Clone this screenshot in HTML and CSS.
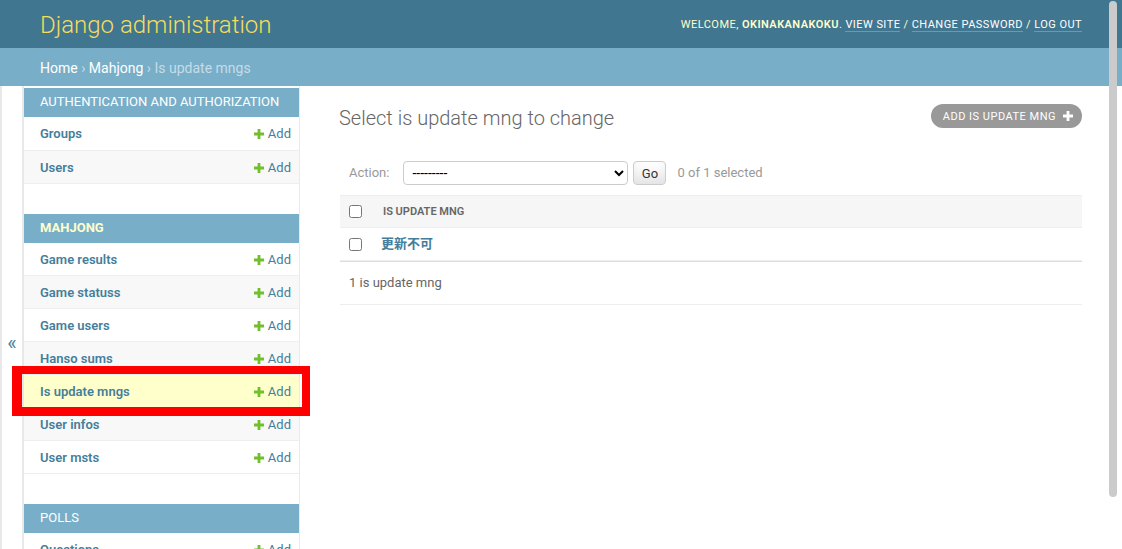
FILE: index.html
```html
<!DOCTYPE html>
<html lang="en">
<head>
<meta charset="utf-8">
<title>Select is update mng to change | Django site admin</title>
<link rel="stylesheet" href="styles.css">
</head>
<body>
<div class="container">
  <header class="header">
    <h1 class="site-name">Django administration</h1>
    <div class="user-tools">Welcome, <strong>okinakanakoku</strong>. <a href="#">View site</a> / <a href="#">Change password</a> / <a href="#">Log out</a></div>
  </header>
  <nav class="breadcrumbs"><a href="#">Home</a> › <a href="#">Mahjong</a> › Is update mngs</nav>
  <div class="main">
    <div class="toggle"><span class="toggle-glyph">«</span></div>
    <nav class="sidebar">
      <div class="module">
        <table>
          <caption>Authentication and Authorization</caption>
          <tbody>
            <tr><th><a href="#">Groups</a></th><td><a href="#" class="addlink"><svg class="plus" width="10" height="10" viewBox="0 0 10 10"><path d="M3.6 0h2.8v3.6H10v2.8H6.4V10H3.6V6.4H0V3.6h3.6z" fill="#70bf2b"/></svg>Add</a></td></tr>
            <tr><th><a href="#">Users</a></th><td><a href="#" class="addlink"><svg class="plus" width="10" height="10" viewBox="0 0 10 10"><path d="M3.6 0h2.8v3.6H10v2.8H6.4V10H3.6V6.4H0V3.6h3.6z" fill="#70bf2b"/></svg>Add</a></td></tr>
          </tbody>
        </table>
      </div>
      <div class="module current-app">
        <table>
          <caption>Mahjong</caption>
          <tbody>
            <tr><th><a href="#">Game results</a></th><td><a href="#" class="addlink"><svg class="plus" width="10" height="10" viewBox="0 0 10 10"><path d="M3.6 0h2.8v3.6H10v2.8H6.4V10H3.6V6.4H0V3.6h3.6z" fill="#70bf2b"/></svg>Add</a></td></tr>
            <tr><th><a href="#">Game statuss</a></th><td><a href="#" class="addlink"><svg class="plus" width="10" height="10" viewBox="0 0 10 10"><path d="M3.6 0h2.8v3.6H10v2.8H6.4V10H3.6V6.4H0V3.6h3.6z" fill="#70bf2b"/></svg>Add</a></td></tr>
            <tr><th><a href="#">Game users</a></th><td><a href="#" class="addlink"><svg class="plus" width="10" height="10" viewBox="0 0 10 10"><path d="M3.6 0h2.8v3.6H10v2.8H6.4V10H3.6V6.4H0V3.6h3.6z" fill="#70bf2b"/></svg>Add</a></td></tr>
            <tr><th><a href="#">Hanso sums</a></th><td><a href="#" class="addlink"><svg class="plus" width="10" height="10" viewBox="0 0 10 10"><path d="M3.6 0h2.8v3.6H10v2.8H6.4V10H3.6V6.4H0V3.6h3.6z" fill="#70bf2b"/></svg>Add</a></td></tr>
            <tr class="current-model"><th><a href="#">Is update mngs</a></th><td><a href="#" class="addlink"><svg class="plus" width="10" height="10" viewBox="0 0 10 10"><path d="M3.6 0h2.8v3.6H10v2.8H6.4V10H3.6V6.4H0V3.6h3.6z" fill="#70bf2b"/></svg>Add</a></td></tr>
            <tr><th><a href="#">User infos</a></th><td><a href="#" class="addlink"><svg class="plus" width="10" height="10" viewBox="0 0 10 10"><path d="M3.6 0h2.8v3.6H10v2.8H6.4V10H3.6V6.4H0V3.6h3.6z" fill="#70bf2b"/></svg>Add</a></td></tr>
            <tr><th><a href="#">User msts</a></th><td><a href="#" class="addlink"><svg class="plus" width="10" height="10" viewBox="0 0 10 10"><path d="M3.6 0h2.8v3.6H10v2.8H6.4V10H3.6V6.4H0V3.6h3.6z" fill="#70bf2b"/></svg>Add</a></td></tr>
          </tbody>
        </table>
      </div>
      <div class="module">
        <table>
          <caption>Polls</caption>
          <tbody>
            <tr><th><a href="#">Questions</a></th><td><a href="#" class="addlink"><svg class="plus" width="10" height="10" viewBox="0 0 10 10"><path d="M3.6 0h2.8v3.6H10v2.8H6.4V10H3.6V6.4H0V3.6h3.6z" fill="#70bf2b"/></svg>Add</a></td></tr>
          </tbody>
        </table>
      </div>
    </nav>
    <main class="content">
      <div class="title-row">
        <h1 class="page-title">Select is update mng to change</h1>
        <a href="#" class="tool-add">Add is update mng<svg class="tool-plus" width="10" height="10" viewBox="0 0 10 10"><path d="M3.6 0h2.8v3.6H10v2.8H6.4V10H3.6V6.4H0V3.6h3.6z" fill="#fff"/></svg></a>
      </div>
      <div class="actions">
        <label class="action-label">Action:</label>
        <select class="action-select"><option>---------</option></select>
        <button class="go-button" type="button">Go</button>
        <span class="action-counter">0 of 1 selected</span>
      </div>
      <table class="results">
        <thead>
          <tr><th class="cb-col"><input type="checkbox" class="cb"></th><th class="col-head">Is update mng</th></tr>
        </thead>
        <tbody>
          <tr><td class="cb-col"><input type="checkbox" class="cb"></td><th class="col-val"><a href="#">更新不可</a></th></tr>
        </tbody>
      </table>
      <p class="paginator">1 is update mng</p>
    </main>
  </div>
</div>
<div class="annotation"></div>
<div class="scroll-thumb"></div>
</body>
</html>
```

FILE: styles.css
```css
html {
  overflow: hidden;
  height: 100%;
}
body {
  margin: 0;
  font-family: Roboto, "Noto Sans", "Noto Sans CJK JP", sans-serif;
  font-size: 14px;
  color: #333;
  background: #fff;
}
a {
  text-decoration: none;
  color: #447e9b;
}

/* header */
.header {
  display: flex;
  justify-content: space-between;
  align-items: center;
  height: 48px;
  box-sizing: border-box;
  padding: 11px 40px 9px;
  background: #417690;
  color: #ffc;
}
.site-name {
  margin: 0;
  font-size: 24px;
  line-height: 28px;
  font-weight: 300;
  color: #f5dd5d;
}
.user-tools {
  font-size: 11px;
  letter-spacing: 0.45px;
  text-transform: uppercase;
  font-weight: 400;
  color: #ffc;
  line-height: 14px;
}
.user-tools strong {
  font-weight: 600;
}
.user-tools a {
  color: #fff;
  border-bottom: 1px solid rgba(255, 255, 255, 0.25);
}

/* breadcrumbs */
.breadcrumbs {
  height: 38px;
  box-sizing: border-box;
  background: #79aec8;
  padding: 11px 40px 9px;
  font-size: 14px;
  line-height: 18px;
  color: #c4dce8;
}
.breadcrumbs a {
  color: #fff;
}

/* main */
.main {
  display: flex;
  align-items: stretch;
}
.toggle {
  flex: 0 0 24px;
  box-sizing: border-box;
  border-left: 2px solid #e8e8e8;
  border-right: 2px solid #e8e8e8;
  text-align: center;
  color: #447e9b;
  font-size: 20px;
}
.toggle-glyph {
  display: block;
  margin-top: 246px;
  line-height: 23px;
}
.sidebar {
  flex: 0 0 276px;
  box-sizing: border-box;
  border-right: 1px solid #eaeaea;
  padding-top: 2px;
}
.module {
  margin-bottom: 30px;
}
.module table {
  width: 100%;
  border-collapse: collapse;
}
.module caption {
  text-align: left;
  padding: 7px 16px 9px;
  font-size: 13px;
  line-height: 13px;
  background: #79aec8;
  color: #fff;
  text-transform: uppercase;
  font-weight: 400;
}
.current-app caption {
  color: #ffc;
  font-weight: 700;
}
.module th,
.module td {
  height: 33px;
  box-sizing: border-box;
  font-size: 13px;
  line-height: 16px;
  border-bottom: 1px solid #eee;
  padding: 9px 8px 7px;
  vertical-align: middle;
}
.module th {
  text-align: left;
  width: 100%;
  padding-left: 16px;
  font-weight: 600;
}
.module td {
  text-align: right;
  white-space: nowrap;
}
.module tbody tr:nth-child(even) {
  background: #f8f8f8;
}
.module tbody tr.current-model {
  background: #ffc;
}
.addlink {
  display: inline-block;
  height: 16px;
  line-height: 16px;
  font-weight: 400;
}
.plus {
  display: inline-block;
  vertical-align: -1px;
  margin-right: 4px;
}

/* content */
.content {
  flex: 1;
  min-width: 0;
  padding: 20px 40px;
}
.title-row {
  display: flex;
  justify-content: space-between;
  align-items: flex-start;
  margin-bottom: 21px;
}
.page-title {
  margin: 0 0 0 -1px;
  font-size: 20px;
  line-height: 24px;
  font-weight: 300;
  color: #666;
}
.tool-add {
  display: inline-flex;
  align-items: center;
  height: 24px;
  margin-top: -2px;
  padding: 0 9px 0 12px;
  background: #999;
  border-radius: 15px;
  color: #fff;
  font-size: 11px;
  letter-spacing: 0.5px;
  text-transform: uppercase;
  font-weight: 400;
}
.tool-plus {
  margin-left: 7px;
}

.actions {
  display: flex;
  align-items: center;
  height: 44px;
  box-sizing: border-box;
  padding: 10px 9px;
  line-height: 24px;
  color: #999;
  font-size: 13px;
}
.action-select {
  width: 225px;
  height: 24px;
  margin: 0 0 0 14px;
  padding: 0 0 0 4px;
  border: 1px solid #ccc;
  border-radius: 4px;
  background: #fff;
  color: #000;
  font-family: Roboto, sans-serif;
  font-size: 14px;
}
.go-button {
  width: 33px;
  height: 24px;
  margin-left: 5px;
  padding: 0;
  border: 1px solid #ccc;
  border-radius: 4px;
  background: #fff;
  box-shadow: 0 -15px 20px -10px rgba(0, 0, 0, 0.15) inset;
  font-family: Roboto, sans-serif;
  font-size: 13px;
  line-height: 1;
  color: #333;
}
.action-counter {
  margin-left: 11px;
}

.results {
  width: 100%;
  border-collapse: collapse;
  border-top: 1px solid #eee;
}
.results thead th {
  background: #f6f6f6;
  height: 32px;
  box-sizing: border-box;
  padding: 0 10px;
  border-bottom: 1px solid #eee;
  vertical-align: middle;
}
.results .cb-col {
  width: 13px;
  padding: 0 11px 0 9px;
  vertical-align: middle;
}
.results tbody td,
.results tbody th {
  height: 33px;
  box-sizing: border-box;
  padding: 8px;
  border-bottom: 1px solid #eee;
  vertical-align: middle;
}
.results tbody td.cb-col {
  padding: 0 11px 0 9px;
}
.cb {
  display: block;
  margin: 0;
  width: 13px;
  height: 13px;
}
.col-head {
  text-align: left;
  font-size: 11px;
  font-weight: 600;
  color: #666;
  text-transform: uppercase;
}
.col-val {
  text-align: left;
  font-size: 13px;
  line-height: 16px;
  font-weight: 700;
}
.col-val a {
  font-family: Roboto, "Noto Sans CJK JP", sans-serif;
}
.paginator {
  margin: 0;
  padding: 10px 9px;
  font-size: 13px;
  line-height: 22px;
  color: #666;
  border-top: 1px solid #ddd;
  border-bottom: 1px solid #eee;
}

/* overlays */
.annotation {
  position: absolute;
  left: 12px;
  top: 366px;
  width: 298px;
  height: 50px;
  box-sizing: border-box;
  border: 8px solid #ff0000;
  border-left-width: 10px;
  border-bottom-width: 9px;
}
.scroll-thumb {
  position: fixed;
  top: 1px;
  right: 5px;
  width: 8px;
  height: 496px;
  border-radius: 4px;
  background: #cbcbcb;
}
```
